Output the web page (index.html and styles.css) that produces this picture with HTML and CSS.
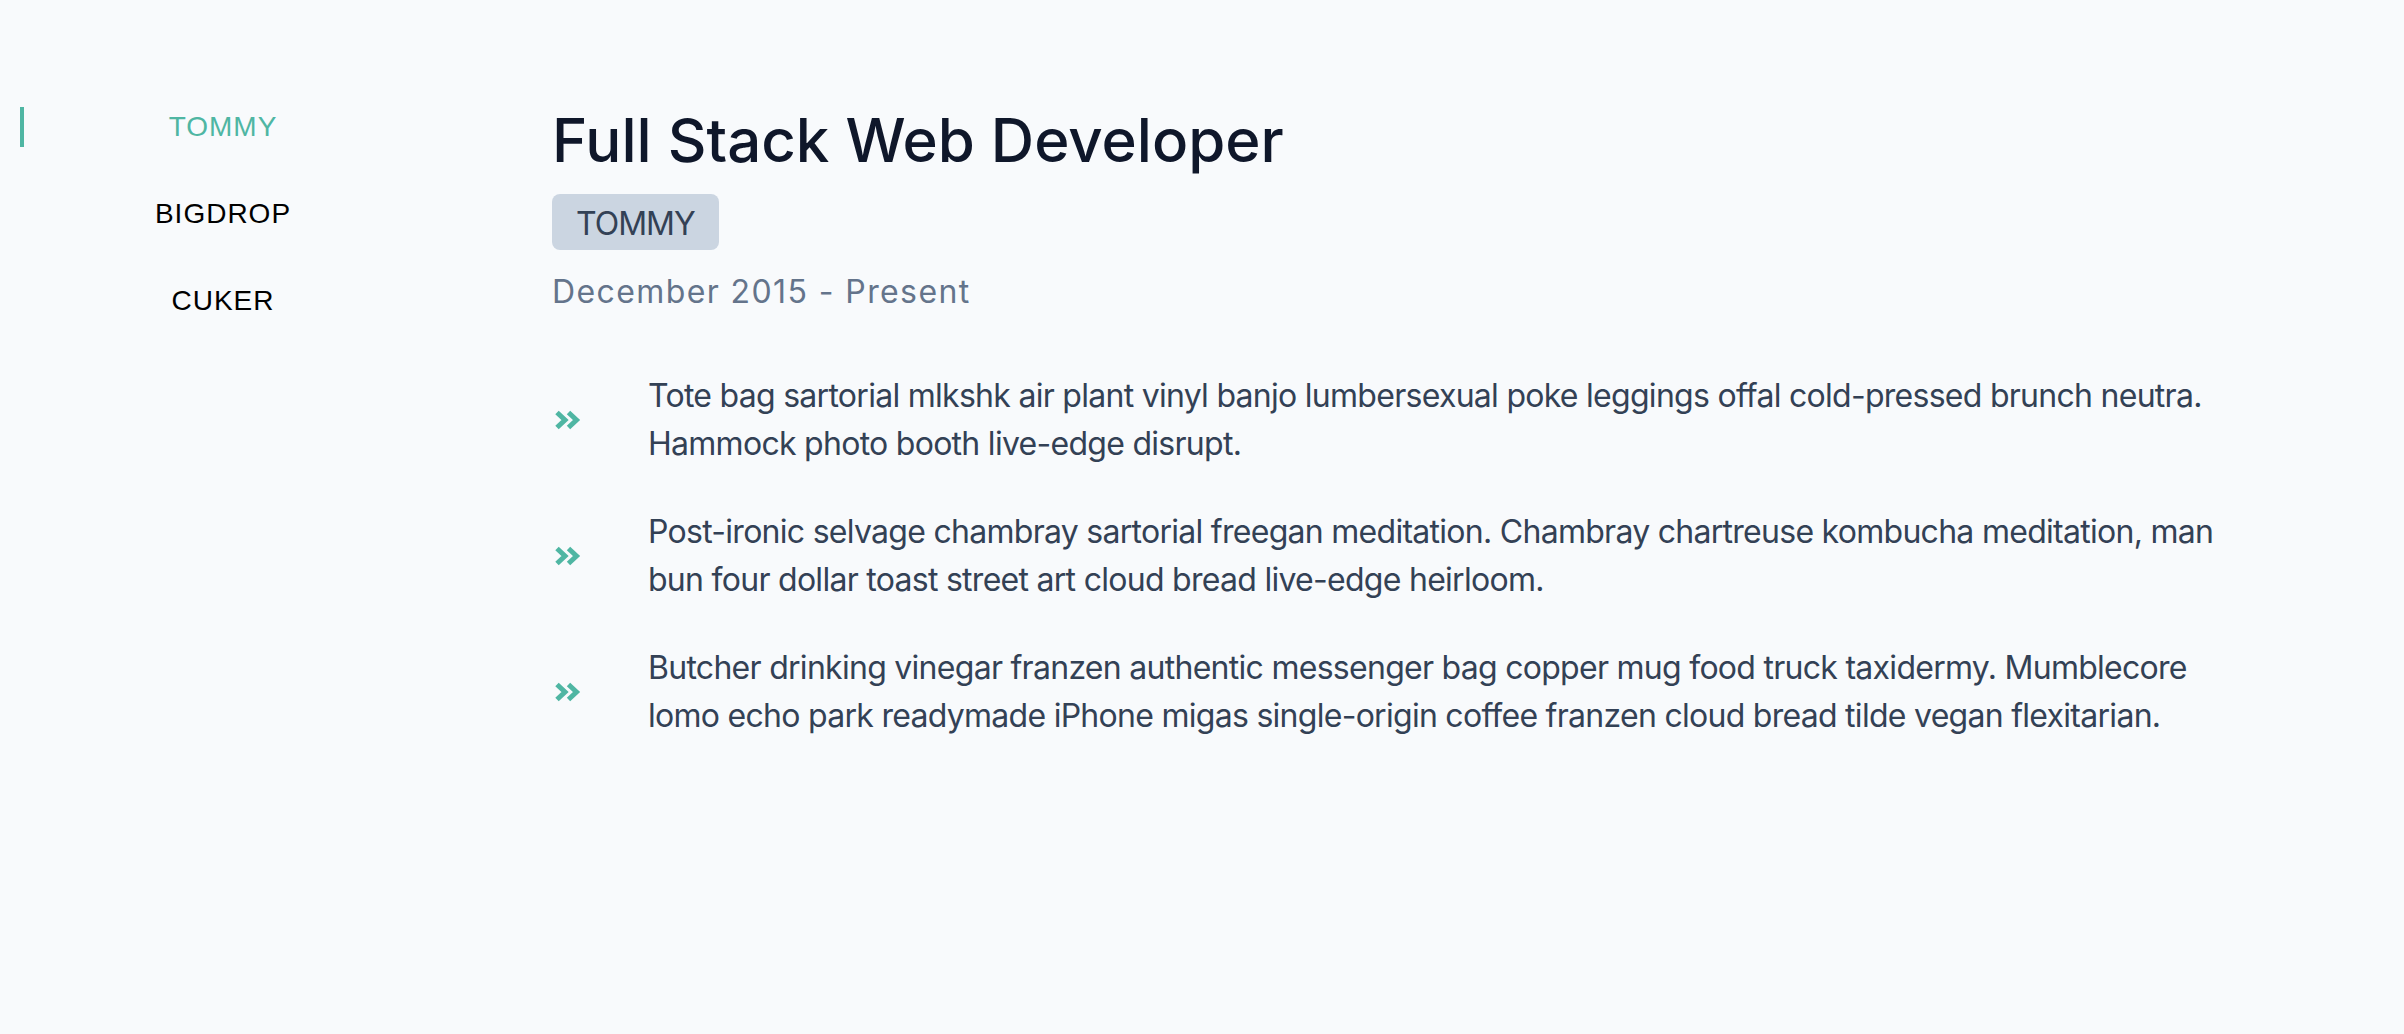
FILE: index.html
```html
<!DOCTYPE html>
<html lang="en">
<head>
<meta charset="utf-8">
<title>Experience</title>
<link rel="stylesheet" href="styles.css">
</head>
<body>
<div class="page">
  <nav class="nav">
    <div class="nav-item active">TOMMY</div>
    <div class="nav-item">BIGDROP</div>
    <div class="nav-item">CUKER</div>
  </nav>
  <main class="content">
    <h1 class="title">Full Stack Web Developer</h1>
    <span class="badge">TOMMY</span>
    <p class="date">December 2015 - Present</p>
    <ul class="list">
      <li class="item">
        <span class="icon"><svg viewBox="0 0 26 20" width="26" height="20"><polyline points="2,2.5 10,10 2,17.5" /><polyline points="13.5,2.5 21.5,10 13.5,17.5" /></svg></span>
        <p class="text">Tote bag sartorial mlkshk air plant vinyl banjo lumbersexual poke leggings offal cold-pressed brunch neutra. Hammock photo booth live-edge disrupt.</p>
      </li>
      <li class="item">
        <span class="icon"><svg viewBox="0 0 26 20" width="26" height="20"><polyline points="2,2.5 10,10 2,17.5" /><polyline points="13.5,2.5 21.5,10 13.5,17.5" /></svg></span>
        <p class="text">Post-ironic selvage chambray sartorial freegan meditation. Chambray chartreuse kombucha meditation, man bun four dollar toast street art cloud bread live-edge heirloom.</p>
      </li>
      <li class="item">
        <span class="icon"><svg viewBox="0 0 26 20" width="26" height="20"><polyline points="2,2.5 10,10 2,17.5" /><polyline points="13.5,2.5 21.5,10 13.5,17.5" /></svg></span>
        <p class="text">Butcher drinking vinegar franzen authentic messenger bag copper mug food truck taxidermy. Mumblecore lomo echo park readymade iPhone migas single-origin coffee franzen cloud bread tilde vegan flexitarian.</p>
      </li>
    </ul>
  </main>
</div>
</body>
</html>
```
FILE: styles.css
```css
html, body {
  margin: 0;
  padding: 0;
  background: #f8fafc;
}
body {
  font-family: Inter, "Noto Sans", sans-serif;
  min-height: 1034px;
}
.page {
  display: flex;
  align-items: flex-start;
}
.nav {
  width: 402px;
  margin-left: 20px;
  padding-top: 107px;
  display: flex;
  flex-direction: column;
  gap: 47px;
}
.nav-item {
  height: 40px;
  line-height: 40px;
  font-family: "Liberation Sans", Arial, sans-serif;
  font-size: 28px;
  letter-spacing: 1px;
  text-align: center;
  color: #000;
  border-left: 4px solid transparent;
}
.nav-item.active {
  color: #4fb6a3;
  border-left-color: #4fb6a3;
}
.content {
  margin-left: 130px;
  padding-top: 104px;
  width: 1688px;
}
.title {
  margin: 0;
  font-size: 60px;
  line-height: 72px;
  font-weight: 500;
  color: #0f172a;
}
.badge {
  display: inline-block;
  margin-top: 18px;
  padding: 6px 24px 2px;
  background: #cbd5e1;
  color: #334155;
  font-size: 32px;
  line-height: 48px;
  letter-spacing: -1px;
  border-radius: 8px;
}
.date {
  margin: 18px 0 0;
  font-size: 32px;
  line-height: 48px;
  letter-spacing: 1.4px;
  color: #64748b;
}
.list {
  list-style: none;
  margin: 56px 0 0;
  padding: 0;
  display: flex;
  flex-direction: column;
  gap: 40px;
}
.item {
  display: flex;
  align-items: center;
}
.icon {
  width: 32px;
  flex: none;
  display: flex;
  align-items: center;
  margin-right: 64px;
}
.icon svg {
  display: block;
  margin-left: 3px;
  fill: none;
  stroke: #4fb6a3;
  stroke-width: 5;
  stroke-linejoin: miter;
}
.text {
  margin: 0;
  width: 1600px;
  font-size: 32px;
  line-height: 48px;
  letter-spacing: -0.72px;
  color: #334155;
}
```
